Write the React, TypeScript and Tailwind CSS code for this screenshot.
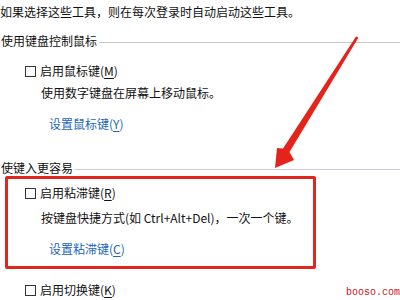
import type { ReactNode } from 'react'

function Box() {
  return <span className="block w-[11px] h-[11px] border border-[#333] bg-white shrink-0" />
}

function Check({ label, hot }: { label: string; hot: string }) {
  return <div className="flex items-center h-4 gap-[4px]">
    <Box />
    <span>{label}(<span className="underline underline-offset-2">{hot}</span>)</span>
  </div>
}

function Link({ label, hot }: { label: string; hot: string }) {
  return <div className="flex items-center h-4 text-[#2166b8]">
    <span>{label}(<span className="underline underline-offset-2">{hot}</span>)</span>
  </div>
}

function Group({ title, line }: { title: string; line: string }) {
  return <div className="flex items-center h-4 pl-[1px]">
    <span className="shrink-0">{title}</span>
    <span className={`flex-1 h-px mt-[3px] ml-[2px] ${line}`} />
  </div>
}

function Row({ children, className }: { children: ReactNode; className: string }) {
  return <div className={`flex items-center h-4 ${className}`}>{children}</div>
}

export default function App() {
  return <div className="relative w-[400px] h-[300px] overflow-hidden bg-white text-[12px] leading-none text-[#111] font-['Noto_Sans_CJK_SC',sans-serif]">
    <div className="flex items-center h-6">如果选择这些工具，则在每次登录时自动启动这些工具。</div>

    <div className="mt-[9px]"><Group title="使用键盘控制鼠标" line="bg-[#c8c8c8]" /></div>
    <div className="mt-[14px] pl-[25px]"><Check label="启用鼠标键" hot="M" /></div>
    <Row className="mt-[6px] pl-[41px]">使用数字键盘在屏幕上移动鼠标。</Row>
    <div className="mt-[15px] pl-[49px]"><Link label="设置鼠标键" hot="Y" /></div>

    <div className="mt-[28px]"><Group title="使键入更容易" line="bg-[#d2c9de]" /></div>

    <div className="ml-[5px] w-[311px] h-[93px] border-[3px] border-[#e0261d] rounded-[2px] pt-[6px]">
      <div className="pl-[17px]"><Check label="启用粘滞键" hot="R" /></div>
      <Row className="mt-[9px] pl-[33px]">按键盘快捷方式(如 Ctrl+Alt+Del)，一次一个键。</Row>
      <div className="mt-[15px] pl-[41px]"><Link label="设置粘滞键" hot="C" /></div>
    </div>

    <div className="mt-[13px] pl-[25px]"><Check label="启用切换键" hot="K" /></div>

    <svg className="absolute left-0 top-0" width="400" height="300" viewBox="0 0 400 300">
      <polygon points="356,36.5 358.5,37.5 289.5,152 294,160 275,168 277,148 283,148.5" fill="#e4231b" />
    </svg>

    <div className="absolute right-0 bottom-[2px] text-[10px] text-[#d0101a] font-['Liberation_Mono',monospace]">booso.com</div>
  </div>
}
